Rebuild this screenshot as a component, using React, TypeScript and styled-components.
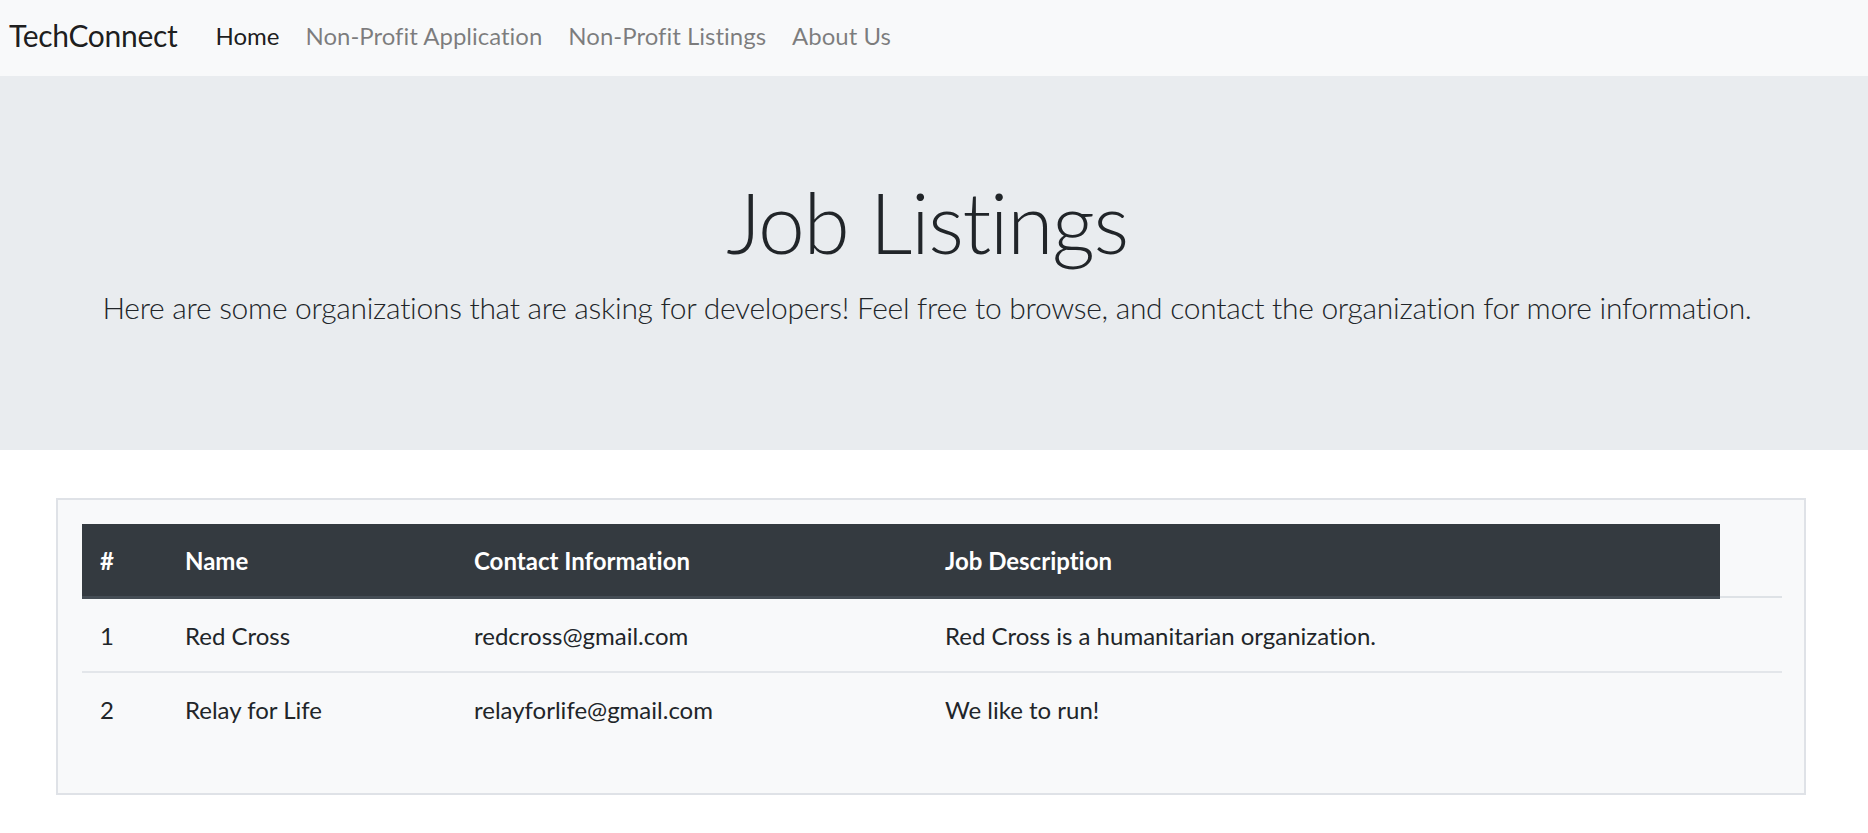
import React from "react";
import styled, { createGlobalStyle } from "styled-components";

const Global = createGlobalStyle`
  html, body { margin: 0; padding: 0; background: #ffffff; }
  body {
    font-family: "Lato", "Open Sans", "Liberation Sans", sans-serif;
    color: #212529;
    font-size: 24px;
    line-height: 1.5;
    font-variant-ligatures: none;
  }
  * { box-sizing: border-box; }
`;

const NavBar = styled.nav`
  height: 76px;
  background: #f8f9fa;
  display: flex;
  align-items: center;
  padding: 0 10px 5px 9px;
`;

const Brand = styled.a`
  font-size: 30px;
  line-height: 45px;
  color: rgba(0, 0, 0, 0.9);
  margin-right: 25px;
  text-decoration: none;
  letter-spacing: -0.3px;
`;

const NavList = styled.div`
  display: flex;
  align-items: center;
`;

const NavLink = styled.a<{ $active?: boolean }>`
  font-size: 24px;
  line-height: 36px;
  padding: 12px 13px;
  color: ${(p) => (p.$active ? "rgba(0,0,0,0.9)" : "rgba(0,0,0,0.5)")};
  text-decoration: none;
`;

const Jumbotron = styled.header`
  background: #e9ecef;
  padding: 96px 55px 96px 41px;
  margin-bottom: 48px;
  text-align: center;
`;

const Title = styled.h1`
  margin: 0 0 12px;
  font-size: 84px;
  font-weight: 300;
  line-height: 1.2;
  letter-spacing: -1.4px;
`;

const Lead = styled.p`
  margin: 0 0 24px;
  font-size: 30px;
  font-weight: 300;
  line-height: 45px;
  letter-spacing: -0.3px;
`;

const Card = styled.section`
  margin: 0 62px 0 56px;
  border: 2px solid #dfe2e7;
  background: #f8f9fa;
  padding: 24px;
`;

const Table = styled.table`
  width: 100%;
  border-collapse: collapse;
  margin-bottom: 24px;
  table-layout: fixed;
`;

const HeadCell = styled.th<{ $blank?: boolean }>`
  text-align: left;
  font-weight: 700;
  font-size: 24px;
  line-height: 36px;
  padding: 19px 18px 17px;
  color: #ffffff;
  background: ${(p) => (p.$blank ? "transparent" : "#343a40")};
  border-bottom: ${(p) => (p.$blank ? "2px solid #dee2e6" : "3px solid #454d55")};
`;

const Cell = styled.td`
  font-size: 24px;
  line-height: 36px;
  padding: 19px 18px 17px;
  border-top: 2px solid #e3e6ea;
  vertical-align: top;
`;

const rows = [
  { id: 1, name: "Red Cross", contact: "redcross@gmail.com", desc: "Red Cross is a humanitarian organization." },
  { id: 2, name: "Relay for Life", contact: "relayforlife@gmail.com", desc: "We like to run!" },
];

export default function App() {
  return (
    <>
      <Global />
      <NavBar>
        <Brand>TechConnect</Brand>
        <NavList>
          <NavLink $active>Home</NavLink>
          <NavLink>Non-Profit Application</NavLink>
          <NavLink>Non-Profit Listings</NavLink>
          <NavLink>About Us</NavLink>
        </NavList>
      </NavBar>
      <Jumbotron>
        <Title>Job Listings</Title>
        <Lead>
          Here are some organizations that are asking for developers! Feel free to browse, and contact the
          organization for more information.
        </Lead>
      </Jumbotron>
      <Card>
        <Table>
          <colgroup>
            <col style={{ width: 85 }} />
            <col style={{ width: 289 }} />
            <col style={{ width: 471 }} />
            <col style={{ width: 793 }} />
            <col style={{ width: 62 }} />
          </colgroup>
          <thead>
            <tr>
              <HeadCell>#</HeadCell>
              <HeadCell>Name</HeadCell>
              <HeadCell>Contact Information</HeadCell>
              <HeadCell>Job Description</HeadCell>
              <HeadCell $blank />
            </tr>
          </thead>
          <tbody>
            {rows.map((r) => (
              <tr key={r.id}>
                <Cell>{r.id}</Cell>
                <Cell>{r.name}</Cell>
                <Cell>{r.contact}</Cell>
                <Cell>{r.desc}</Cell>
                <Cell />
              </tr>
            ))}
          </tbody>
        </Table>
      </Card>
    </>
  );
}
